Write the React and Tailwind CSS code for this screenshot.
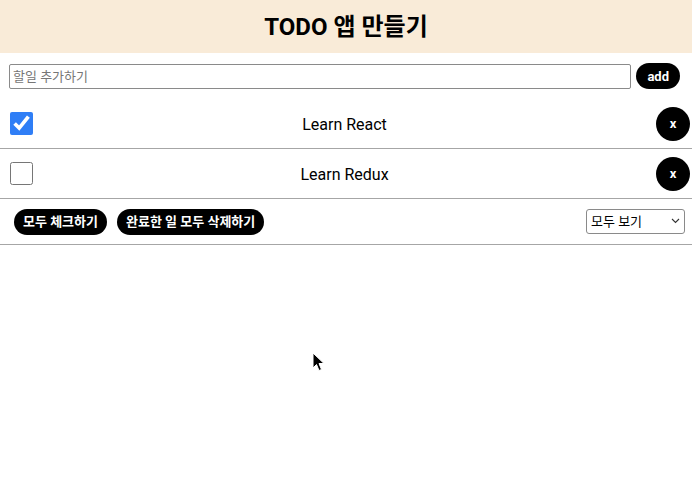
import React, { useState } from "react";

export default function App() {
  const [todos, setTodos] = useState([
    { id: 1, text: "Learn React", done: true },
    { id: 2, text: "Learn Redux", done: false },
  ]);

  const toggle = (id) =>
    setTodos(todos.map((t) => (t.id === id ? { ...t, done: !t.done } : t)));

  return (
    <div
      className="relative w-[692px] h-[492px] bg-white text-black"
      style={{ fontFamily: 'Roboto, "Noto Sans CJK KR", sans-serif' }}
    >
      {/* Header */}
      <div className="h-[53px] bg-[#f9ebd8] flex items-center justify-center">
        <h1 className="text-[24px] font-bold leading-none">TODO 앱 만들기</h1>
      </div>

      {/* Add todo */}
      <div className="h-[46px] flex items-center gap-[5px] pl-[9px] pr-[12px]">
        <input
          type="text"
          placeholder="할일 추가하기"
          className="flex-1 h-[25px] border border-[#8a8a8a] rounded-[2px] px-[3px] text-[13px] placeholder:text-[#767676] outline-none"
        />
        <button className="h-[26px] px-[11px] rounded-full bg-black text-white text-[13px] font-bold leading-none">
          add
        </button>
      </div>

      {/* Todo list */}
      {todos.map((t) => (
        <div
          key={t.id}
          className="h-[50px] flex items-center pl-[10px] pr-[2px] border-b border-[#a6a6a6]"
        >
          <input
            type="checkbox"
            checked={t.done}
            onChange={() => toggle(t.id)}
            className="w-[23px] h-[23px] accent-[#2f7ef6] m-0"
          />
          <p className="flex-1 text-center text-[16px] pt-[2px]">{t.text}</p>
          <button className="w-[34px] h-[34px] rounded-full bg-black text-white text-[13px] font-bold leading-none">
            x
          </button>
        </div>
      ))}

      {/* Footer */}
      <div className="h-[46px] flex items-center pl-[14px] pr-[7px] border-b border-[#a6a6a6]">
        <div className="flex gap-[10px]">
          <button className="h-[26px] px-[9px] rounded-full bg-black text-white text-[13px] font-bold leading-none">
            모두 체크하기
          </button>
          <button className="h-[26px] px-[9px] rounded-full bg-black text-white text-[13px] font-bold leading-none">
            완료한 일 모두 삭제하기
          </button>
        </div>
        <div className="flex-1" />
        <div className="relative">
          <select className="appearance-none w-[99px] h-[25px] border border-[#8a8a8a] rounded-[3px] text-[13px] pl-[4px] bg-white outline-none">
            <option>모두 보기</option>
            <option>완료한 일</option>
            <option>해야 할 일</option>
          </select>
          <svg
            className="absolute right-[5px] top-[9px] pointer-events-none"
            width="9"
            height="6"
            viewBox="0 0 9 6"
          >
            <path d="M1 1 L4.5 4.5 L8 1" fill="none" stroke="#333" strokeWidth="1.1" />
          </svg>
        </div>
      </div>

      {/* Mouse cursor */}
      <svg
        className="absolute left-[312px] top-[352px]"
        width="14"
        height="20"
        viewBox="0 0 14 20"
      >
        <path
          d="M1 1 L1 16 L4.5 12.5 L7 18.5 L9.5 17.5 L7 11.5 L12 11.5 Z"
          fill="black"
          stroke="white"
          strokeWidth="1"
        />
      </svg>
    </div>
  );
}
